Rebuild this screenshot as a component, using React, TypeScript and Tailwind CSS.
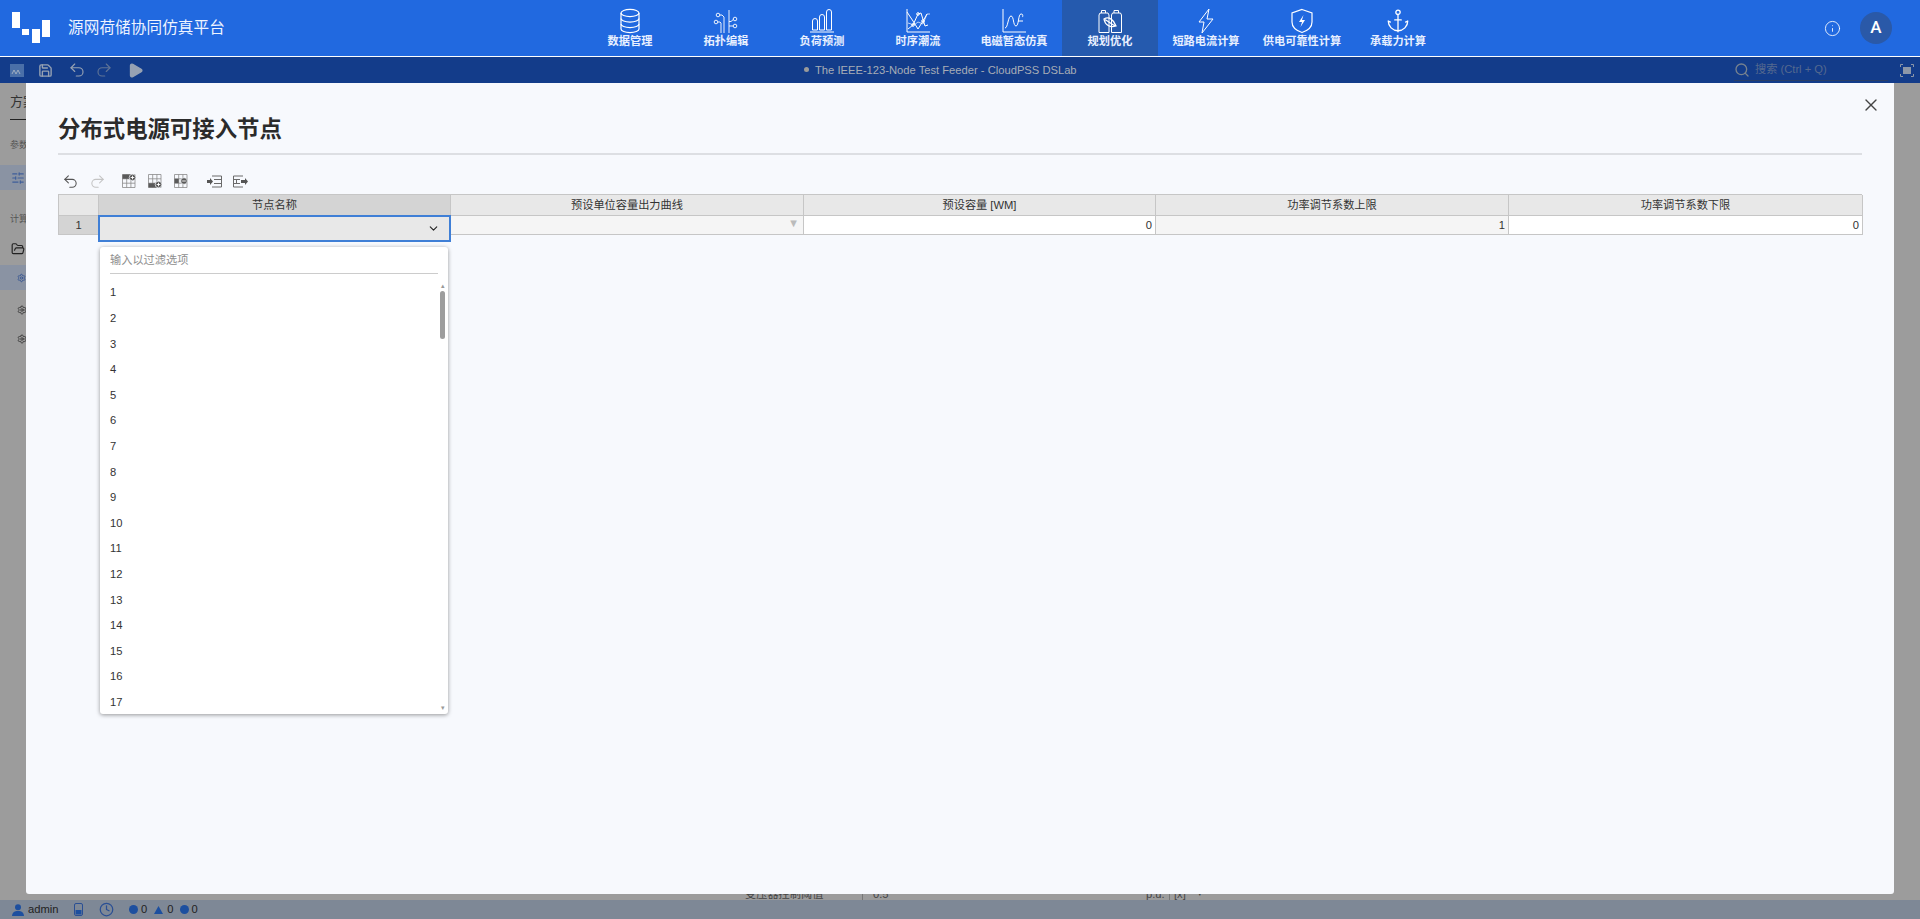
import { X, ChevronDown, Undo2, Redo2, Search, Info, Save, Play, Clock, SlidersHorizontal, Settings, FolderOpen, Anchor } from "lucide-react"
import { ReactNode } from "react"

const FONT = "font-['Liberation_Sans','Noto_Sans_CJK_SC',sans-serif]"

const Db = () => (
  <svg width="24" height="26" viewBox="0 0 24 26" fill="none" stroke="currentColor" strokeWidth="1.2">
    <ellipse cx="12" cy="5" rx="9" ry="3.6" />
    <path d="M3 5v16c0 2 4 3.6 9 3.6s9-1.6 9-3.6V5" />
    <path d="M3 10.5c0 2 4 3.6 9 3.6s9-1.6 9-3.6M3 16c0 2 4 3.6 9 3.6s9-1.600 9-3.6" />
  </svg>
)
const Topo = () => (
  <svg width="26" height="26" viewBox="0 0 26 26" fill="none" stroke="currentColor" strokeWidth=".9">
    <circle cx="5" cy="7" r="1.800" /><circle cx="3" cy="14" r="1.800" /><circle cx="22" cy="11" r="1.800" /><circle cx="22" cy="18" r="1.800" />
    <path d="M6.800 7H9l2 2v16M4.800 14H7l1 1v10M16 2v23M20.300 11.500 18 13.500h-2M20.200 18H16" />
  </svg>
)
const Bars = () => (
  <svg width="26" height="26" viewBox="0 0 26 26" fill="none" stroke="currentColor" strokeWidth="1">
    <path d="M1 24h24M3.500 22v-9a2.500 2.500 0 0 1 5 0v9zM10.500 22V9a2.500 2.500 0 0 1 5 0v13zM17.500 22V4a2.500 2.500 0 0 1 5 0v18z" />
  </svg>
)
const Lines = () => (
  <svg width="26" height="26" viewBox="0 0 26 26" fill="none" stroke="currentColor" strokeWidth="1">
    <path d="M2 1v23h23" />
    <path d="M2 4l6 9 5 8 5-8 4-7" /><path d="M3 21l5-4 5-11 3-1 4 13 3-1" />
    <path d="M3 15l6 2 4-3 5 2 4-10h3" strokeWidth=".7" />
    <circle cx="13" cy="6" r="1.300" /><circle cx="8" cy="17" r="1.300" /><circle cx="18" cy="13" r="1.300" />
  </svg>
)
const Wave = () => (
  <svg width="26" height="26" viewBox="0 0 26 26" fill="none" stroke="currentColor" strokeWidth="1">
    <path d="M2 1v23h23" />
    <path d="M4 20c3 0 3-12 6-12s2 10 5 10 2-12 5-12 1 3 2 3" /><path d="M17 13h5" />
  </svg>
)
const Battery = () => (
  <svg width="26" height="26" viewBox="0 0 26 26" fill="none" stroke="currentColor" strokeWidth="1">
    <path d="M4.500 5V2.500h4V5M17 5V2.500h4.500V5M2 7l1-2h8l1 2v17.500H2zM14.500 7l1-2h8l1 2v17.500h-10z" />
    <path d="M7 11c5-3 10 1 12 7-6 2-11-1-12-7zM8 11.500l10 6.500" strokeWidth="1.300" />
  </svg>
)
const Bolt = () => (
  <svg width="18" height="26" viewBox="0 0 18 26" fill="none" stroke="currentColor" strokeWidth="1">
    <path d="M12 1 2 14h5L5 25l11-14h-6z" />
  </svg>
)
const Shield = () => (
  <svg width="24" height="26" viewBox="0 0 24 26" fill="none" stroke="currentColor" strokeWidth="1.2">
    <path d="M12 1.500 22 5v9c0 5-4 8.500-10 10.500C6 22.500 2 19 2 14V5z" />
    <path d="M13.500 7 9 14h3l-1.500 5 4.500-7h-3z" fill="currentColor" stroke="none" />
  </svg>
)

// table toolbar glyphs: a 3x3 grid with some cells filled and a round badge
const Grid = ({ fill, cx, cy, plus }: { fill: string; cx: number; cy: number; plus: boolean }) => (
  <svg width="14" height="14" viewBox="0 0 14 14" fill="none">
    <path d="M.5.5h12.500v13H.5zM.5 4.800h12.500M.5 9.200h12.500M4.700.5v13M8.900.5v13" stroke="#8a8a8a" strokeWidth=".8" />
    <path d={fill} fill="#5a5a5a" />
    <circle cx={cx} cy={cy} r="3.300" fill="#5a5a5a" stroke="#f7f9fd" strokeWidth=".7" />
    <path d={plus ? `M${cx - 1.800} ${cy}h3.600M${cx} ${cy - 1.800}v3.600` : `M${cx - 1.800} ${cy}h3.600`} stroke="#fff" strokeWidth=".9" />
  </svg>
)
const MoveLeft = () => (
  <svg width="15" height="13" viewBox="0 0 15 13" fill="none">
    <path d="M5 1h9.500v11H5M7 4.500h7.500M7 8.500h7.500" stroke="#6a6a6a" />
    <path d="M0 5h3V3l3 3.500L3 10V8H0z" fill="#555" />
  </svg>
)
const MoveRight = () => (
  <svg width="15" height="13" viewBox="0 0 15 13" fill="none">
    <path d="M10 1H.5v11H10M.5 4.500H7M.5 8.500H7M3.500 4.500v4" stroke="#6a6a6a" />
    <path d="M8 5h4V3l3 3.500L12 10V8H8z" fill="#555" />
  </svg>
)

const navItems: { label: string; icon: ReactNode; active?: boolean }[] = [
  { label: "数据管理", icon: <Db /> },
  { label: "拓扑编辑", icon: <Topo /> },
  { label: "负荷预测", icon: <Bars /> },
  { label: "时序潮流", icon: <Lines /> },
  { label: "电磁暂态仿真", icon: <Wave /> },
  { label: "规划优化", icon: <Battery />, active: true },
  { label: "短路电流计算", icon: <Bolt /> },
  { label: "供电可靠性计算", icon: <Shield /> },
  { label: "承载力计算", icon: <Anchor size={26} strokeWidth={1.2} /> },
]

const options = Array.from({ length: 17 }, (_, i) => i + 1)

const Logo = () => (
  <svg width="40" height="32" viewBox="0 0 40 32" fill="#fff">
    <rect x="0" y="0" width="8" height="16" /><rect x="10" y="17" width="7" height="6" /><rect x="20" y="17" width="8" height="14" /><rect x="30" y="8" width="8" height="17" />
  </svg>
)

function Nav() {
  return (
    <div className="flex h-[56px] bg-[#2169e0] text-white">
      <div className="flex w-[582px] items-center gap-[16px] pl-[12px]">
        <Logo />
        <span className="text-[15.6px] tracking-[0.1px] text-[#eef4ff]">源网荷储协同仿真平台</span>
      </div>
      {navItems.map((n) => (
        <div key={n.label} className={`flex h-[56px] w-[96px] flex-col items-center pt-[9px] ${n.active ? "bg-[#255aae]" : ""}`}>
          <div className="flex h-[24px] items-center justify-center">{n.icon}</div>
          <span className="mt-[1px] text-[11.2px] leading-[14px] font-bold whitespace-nowrap text-[#e8f0ff]">{n.label}</span>
        </div>
      ))}
      <div className="flex flex-1 items-center justify-end gap-[19px] pr-[28px]">
        <Info size={17} strokeWidth={1.2} />
        <div className="flex h-[32px] w-[32px] items-center justify-center rounded-full bg-[#2a59a8] font-['Roboto'] text-[17px] font-medium">A</div>
      </div>
    </div>
  )
}

function SubBar() {
  return (
    <div className="flex h-[27px] items-center border-t border-white bg-[#133c8a] text-[#97a2b3]">
      <div className="flex w-[800px] items-center pl-[10px]">
        <svg width="14" height="13" viewBox="0 0 14 13" fill="#4a6fa8" className="mr-[14px]"><rect width="14" height="13" /><path d="M2 10l2-4 2 4 2-4 2 4" stroke="#a0aec0" fill="none" /></svg>
        <Save size={15} strokeWidth={2.2} className="mr-[15px]" />
        <Undo2 size={18} strokeWidth={1.5} className="mr-[9px]" />
        <Redo2 size={18} strokeWidth={1.5} className="mr-[14px] text-[#5f7396]" />
        <Play size={17} fill="currentColor" />
      </div>
      <div className="flex w-[280px] items-center gap-[6px] pl-[4px] text-[11.2px] font-medium whitespace-nowrap text-[#a7adb6]">
        <span className="h-[5px] w-[5px] rounded-full bg-[#9a9a9a]" />
        The IEEE-123-Node Test Feeder - CloudPSS DSLab
      </div>
      <div className="flex flex-1 items-center justify-end pr-[6px]">
        <div className="mr-[12px] flex h-[22px] w-[154px] items-center gap-[5px] border-b border-[#2a3f66] text-[11.2px] text-[#55698f]">
          <Search size={16} className="text-[#77828f]" />
          搜索 (Ctrl + Q)
        </div>
        <svg width="14" height="13" viewBox="0 0 14 13" fill="none" stroke="#8c97a8"><path d="M.5 3V.5H3M11 .5h2.500V3M13.500 10v2.500H11M3 12.500H.5V10" /><rect x="3" y="3" width="8" height="7" fill="#8c97a8" stroke="none" /></svg>
      </div>
    </div>
  )
}

function Behind() {
  return (
    <div className="flex flex-1 overflow-hidden bg-[#9c9c9c] text-[#333]">
      <div className="flex w-[26px] flex-col overflow-hidden text-[11.2px] whitespace-nowrap">
        <div className="ml-[10px] h-[37px] w-[16px] border-b border-[#222] pt-[11px] text-[13px] leading-[15px]">方案</div>
        <div className="mt-[19px] ml-[10px] text-[9px] leading-[12px] text-[#555]">参数</div>
        <div className="mt-[14px] flex h-[25px] items-center bg-[#8a93a3] pl-[11px] text-[#3f5f9a]"><SlidersHorizontal size={14} /></div>
        <div className="mt-[23px] ml-[10px] text-[9px] leading-[12px] text-[#555]">计算</div>
        <div className="mt-[17px] pl-[11px] text-[#222]"><FolderOpen size={14} /></div>
        <div className="mt-[9px] flex h-[25px] items-center bg-[#8a93a3] pl-[17px] text-[#2c4d8f]"><Settings size={10} /></div>
        <div className="mt-[15px] pl-[17px]"><Settings size={10} /></div>
        <div className="mt-[19px] pl-[17px]"><Settings size={10} /></div>
      </div>
      <div className="flex flex-1 items-end overflow-hidden">
        <div className="flex h-[13px] w-full translate-y-[1px] items-center text-[11.2px] text-[#444]">
          <span className="ml-[719px] w-[117px]">变压器控制阈值</span>
          <span className="h-full border-l border-[#777]" />
          <span className="ml-[10px] w-[270px]">0.5</span>
          <span className="ml-[3px] w-[23px]">p.u.</span>
          <span className="h-full border-l border-[#777]" />
          <span className="ml-[4px]">[x]</span>
          <span className="ml-[12px] text-[7px]">▾</span>
        </div>
      </div>
    </div>
  )
}

function Status() {
  return (
    <div className="flex h-[19px] items-center bg-[#7e8896] pl-[12px] text-[11.2px] text-[#222]">
      <svg width="12" height="12" viewBox="0 0 12 12" fill="#1d4f9f"><circle cx="6" cy="3.200" r="3" /><path d="M0 12c0-3 2-4.500 4.500-5h3C10 7.500 12 9 12 12z" /></svg>
      <span className="ml-[4px] w-[46px]">admin</span>
      <svg width="9" height="13" viewBox="0 0 9 13" className="mr-[16px]" fill="none" stroke="#2a4f94"><rect x=".5" y=".5" width="8" height="12" rx="1.500" /><rect x="1.500" y="7" width="6" height="4.500" fill="#1d4f9f" stroke="none" /></svg>
      <Clock size={15} className="mr-[15px] text-[#2a4f94]" />
      <span className="mr-[3px] h-[9px] w-[9px] rounded-full bg-[#1d4f9f]" />
      <span className="mr-[7px]">0</span>
      <svg width="9" height="8" viewBox="0 0 9 8" fill="#1d4f9f" className="mr-[4px]"><path d="M4.500 0 9 8H0z" /></svg>
      <span className="mr-[7px]">0</span>
      <span className="mr-[2px] h-[9px] w-[9px] rounded-full bg-[#1d4f9f]" />
      <span>0</span>
    </div>
  )
}

function Cell({ children, className }: { children?: ReactNode; className: string }) {
  return <div className={`flex items-center border-r border-b border-[#c6c6c6] px-[3px] text-[11.2px] text-[#333] ${className}`}>{children}</div>
}

function Sheet() {
  return (
    <div className="relative mx-[32px] grid h-[41px] grid-cols-[40px_352px_353px_352px_353px_354px] grid-rows-[21px_19px] border-t border-l border-[#c6c6c6]">
      <Cell className="bg-[#e8e8e8]" />
      <Cell className="justify-center bg-[#d4d4d4]">节点名称</Cell>
      <Cell className="justify-center bg-[#e8e8e8]">预设单位容量出力曲线</Cell>
      <Cell className="justify-center bg-[#e8e8e8]">预设容量 [WM]</Cell>
      <Cell className="justify-center bg-[#e8e8e8]">功率调节系数上限</Cell>
      <Cell className="justify-center bg-[#e8e8e8]">功率调节系数下限</Cell>
      <Cell className="justify-center bg-[#d4d4d4]">1</Cell>
      <Cell className="bg-[#e8e8e8]" />
      <Cell className="justify-end bg-[#f5f5f5] pr-[4px] pb-[3px] text-[7px] text-[#bbb]">▼</Cell>
      <Cell className="justify-end bg-white">0</Cell>
      <Cell className="justify-end bg-[#f5f5f5]">1</Cell>
      <Cell className="justify-end bg-white">0</Cell>

      <div className="absolute top-[20px] left-[39px] flex h-[27px] w-[353px] items-center justify-end border-2 border-[#3f7fd6] bg-[#e8e8e8] pr-[9px]">
        <ChevronDown size={13} strokeWidth={2} className="text-[#222]" />
      </div>

      <div className="absolute top-[52px] left-[41px] flex h-[467px] w-[348px] flex-col overflow-hidden rounded-[3px] bg-white shadow-[0_1px_4px_rgba(0,0,0,0.4)]">
        <div className="mx-[10px] flex h-[27px] shrink-0 items-end border-b border-[#ccc] pb-[4px] text-[11.2px] text-[#8e8e8e]">输入以过滤选项</div>
        <div className="mt-[6px] flex flex-1 overflow-hidden pr-[3px] pl-[10px]">
          <div className="flex-1 text-[11.2px] text-[#333]">
            {options.map((o) => (
              <div key={o} className="flex h-[25.6px] items-center">{o}</div>
            ))}
          </div>
          <div className="flex w-[5px] shrink-0 flex-col items-center justify-between">
            <div className="flex flex-col items-center">
              <span className="text-[7px] leading-[11px] text-[#999]">▴</span>
              <span className="h-[48px] w-[5px] rounded-full bg-[#9d9d9d]" />
            </div>
            <span className="text-[7px] leading-[12px] text-[#999]">▾</span>
          </div>
        </div>
      </div>
    </div>
  )
}

function Modal() {
  return (
    <div className="absolute top-[83px] left-[26px] flex h-[811px] w-[1868px] flex-col rounded-b-[3px] bg-[#f7f9fd]">
      <X size={20} strokeWidth={1.6} className="absolute top-[12px] right-[13px] text-[#444]" />
      <div className="mx-[32px] flex h-[72px] items-end border-b-2 border-[#dddfe3]">
        <h1 className="mb-[8px] text-[22.4px] leading-[30px] font-bold text-[#2b2b2b]">分布式电源可接入节点</h1>
      </div>
      <div className="mx-[32px] flex h-[38px] items-center pt-[14px] pl-[4px]">
        <Undo2 size={17} strokeWidth={1.5} className="text-[#555]" />
        <Redo2 size={17} strokeWidth={1.5} className="ml-[10px] text-[#c4c4c4]" />
        <div className="ml-[16px] flex gap-[12px]">
          <Grid fill="M.5.5h8.400v4.300H.5z" cx={10.5} cy={3.5} plus />
          <Grid fill="M.5 9.200h8.400v4.300H.5z" cx={10.5} cy={10.5} plus />
          <Grid fill="M.5 4.800h4.200v4.400H.5z" cx={10} cy={7} plus={false} />
        </div>
        <div className="ml-[19px] flex gap-[11px]">
          <MoveLeft />
          <MoveRight />
        </div>
      </div>
      <div className="h-[1px]" />
      <Sheet />
    </div>
  )
}

export default function App() {
  return (
    <div className={`relative flex h-[919px] w-[1920px] flex-col overflow-hidden ${FONT}`}>
      <Nav />
      <SubBar />
      <Behind />
      <Status />
      <Modal />
    </div>
  )
}
